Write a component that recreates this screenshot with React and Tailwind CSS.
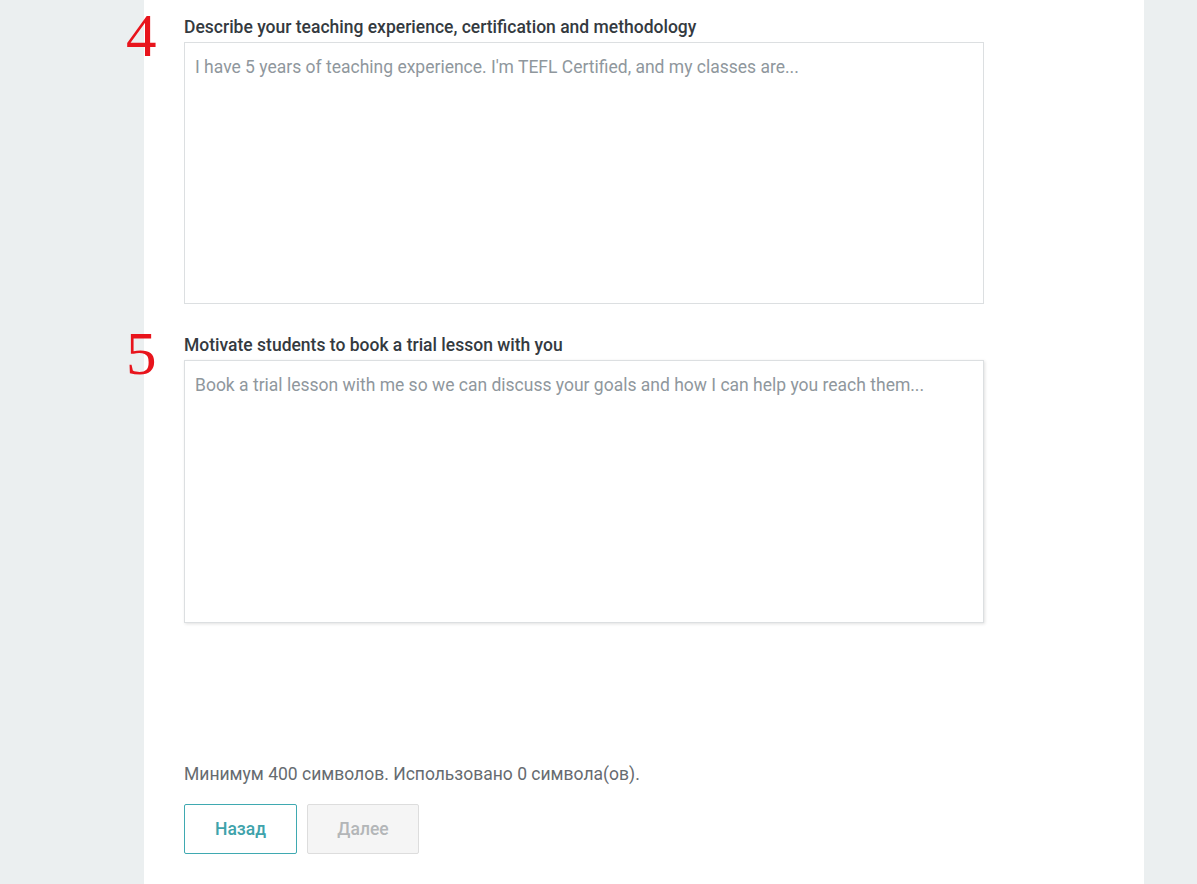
const fields = [
  {
    num: '4',
    label: 'Describe your teaching experience, certification and methodology',
    placeholder: "I have 5 years of teaching experience. I'm TEFL Certified, and my classes are...",
    h: 'h-[262px]',
  },
  {
    num: '5',
    label: 'Motivate students to book a trial lesson with you',
    placeholder: 'Book a trial lesson with me so we can discuss your goals and how I can help you reach them...',
    h: 'h-[263px]',
    shadow: true,
  },
];

function Field({ num, label, placeholder, h, shadow }) {
  return (
    <div className="relative">
      {/* red step number */}
      <span
        className="absolute left-[-58px] top-[-9px] text-[61px] leading-none text-[#e8141c]"
        style={{ fontFamily: '"Liberation Serif", serif' }}
      >
        {num}
      </span>
      <label className="block text-[17.5px] leading-[26px] font-medium text-[#343a3f] mb-[2px]">{label}</label>
      <textarea
        placeholder={placeholder}
        className={`block w-[800px] ${h} resize-none border border-[#dcdfe1] bg-white px-[10px] pt-[11px] text-[17.5px] leading-[26px] text-[#333] placeholder:text-[#8f979d] outline-none ${shadow ? 'shadow-[1px_1px_3px_rgba(0,0,0,0.12)]' : ''}`}
      />
    </div>
  );
}

export default function App() {
  return (
    <div
      className="flex min-h-screen bg-[#ebeff0]"
      style={{ fontFamily: 'Roboto, "Liberation Sans", sans-serif' }}
    >
      <div className="w-[144px] shrink-0" />
      <main className="w-[1000px] shrink-0 bg-white pl-10 pt-[14px] pb-[30px]">
        <div className="flex flex-col gap-[28px]">
          {fields.map((f) => (
            <Field key={f.num} {...f} />
          ))}
        </div>

        <p className="mt-[138px] text-[17.5px] leading-[26px] text-[#666b70]">
          Минимум 400 символов. Использовано 0 символа(ов).
        </p>

        <div className="mt-[17px] flex gap-[10px]">
          <button className="w-[113px] h-[50px] rounded-[2px] border border-[#3fa9b1] bg-white text-[17.5px] font-medium text-[#3fa3ab]">
            Назад
          </button>
          <button
            disabled
            className="w-[112px] h-[50px] rounded-[2px] border border-[#dddddd] bg-[#f5f5f5] text-[17.5px] font-medium text-[#b3b6b8]"
          >
            Далее
          </button>
        </div>
      </main>
    </div>
  );
}
